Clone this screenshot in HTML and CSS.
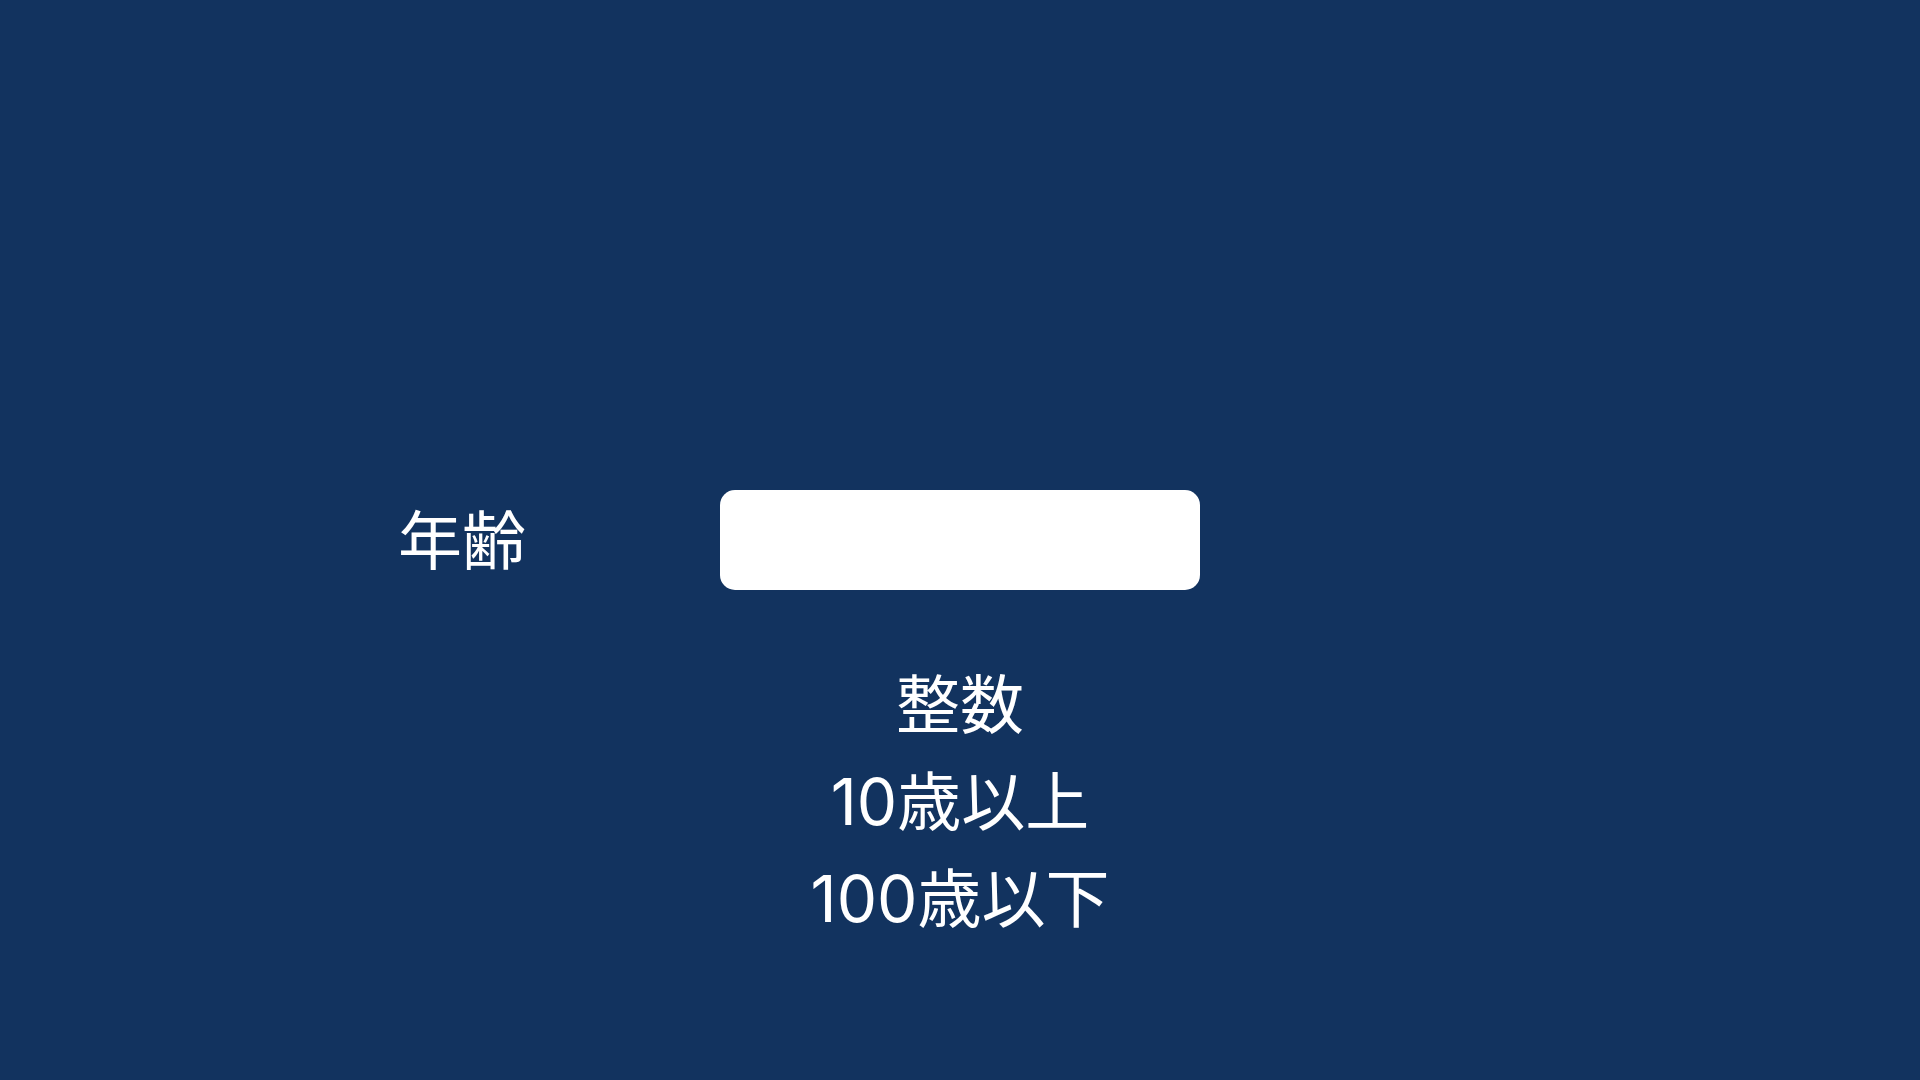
FILE: index.html
```html
<!DOCTYPE html>
<html lang="ja">
<head>
<meta charset="utf-8">
<title>年齢</title>
<link rel="stylesheet" href="styles.css">
</head>
<body>
<main class="page">
  <div class="form-row">
    <label class="label" for="age">年齢</label>
    <div class="field" id="age"></div>
  </div>
  <div class="rules">
    <p>整数</p>
    <p>10歳以上</p>
    <p>100歳以下</p>
  </div>
</main>
</body>
</html>
```

FILE: styles.css
```css
* { box-sizing: border-box; }
html, body {
  margin: 0;
  padding: 0;
  width: 100%;
  height: 100%;
  background: #12335f;
}
body {
  font-family: "Noto Sans CJK JP", "Noto Sans", sans-serif;
  color: #ffffff;
}
.page {
  height: 1080px;
  padding-top: 490px;
  display: flex;
  flex-direction: column;
}
.form-row {
  display: grid;
  grid-template-columns: 1fr 480px 1fr;
  align-items: center;
}
.label {
  justify-self: end;
  margin-right: 194px;
  padding-bottom: 8px;
  font-size: 64px;
  line-height: 1;
}
.field {
  height: 100px;
  background: #ffffff;
  border-radius: 15px;
}
.rules {
  margin-top: 66px;
  text-align: center;
}
.rules p {
  margin: 0;
  font-family: "Inter", "Noto Sans CJK JP", sans-serif;
  font-weight: 400;
  font-size: 64px;
  line-height: 97px;
}
```
